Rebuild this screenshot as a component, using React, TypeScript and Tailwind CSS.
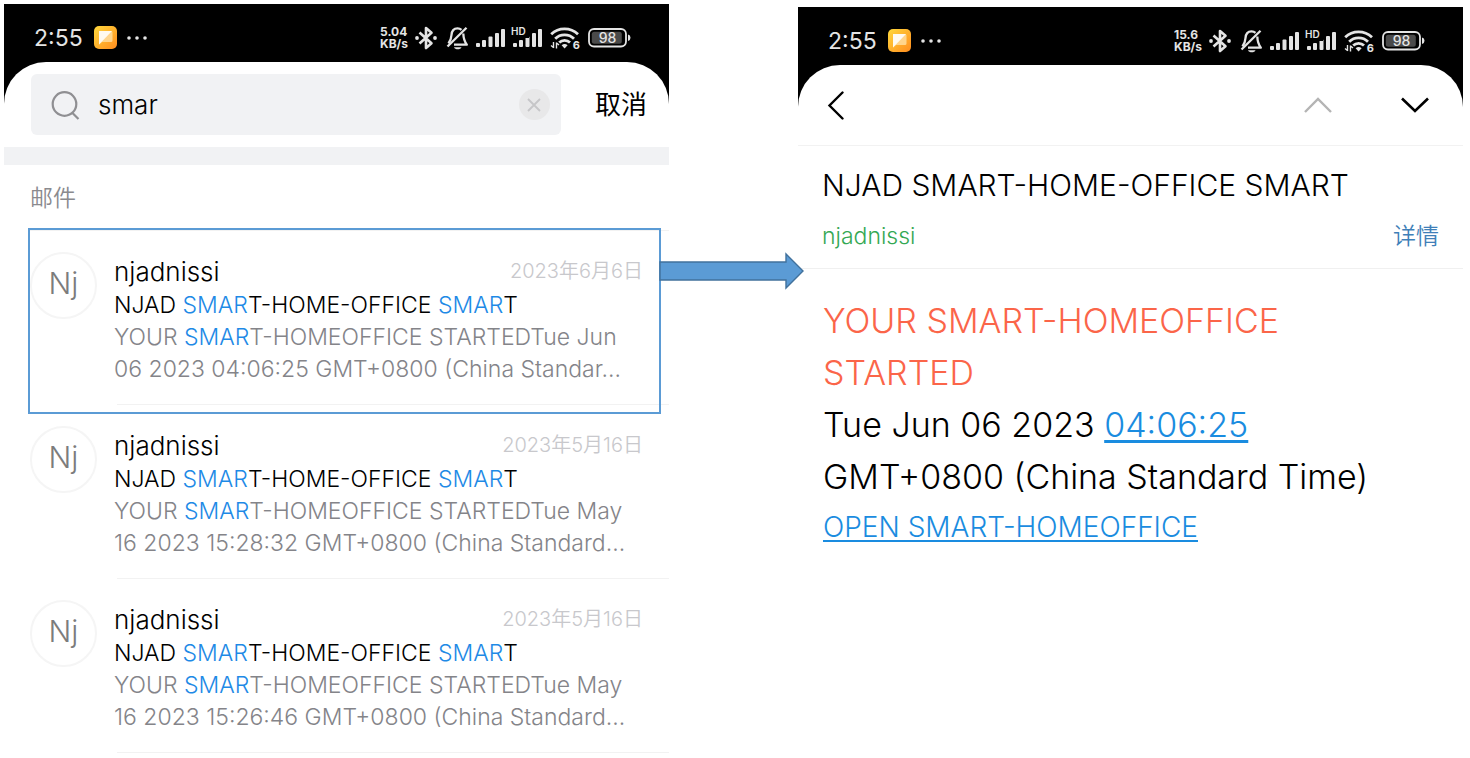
import { useState } from "react";

type Mail = { id: number; date: string; lines: [string, string] };

const mails: Mail[] = [
  { id: 1, date: "2023年6月6日", lines: ["T-HOMEOFFICE STARTEDTue Jun", "06 2023 04:06:25 GMT+0800 (China Standar…"] },
  { id: 2, date: "2023年5月16日", lines: ["T-HOMEOFFICE STARTEDTue May", "16 2023 15:28:32 GMT+0800 (China Standard…"] },
  { id: 3, date: "2023年5月16日", lines: ["T-HOMEOFFICE STARTEDTue May", "16 2023 15:26:46 GMT+0800 (China Standard…"] },
];

function SignalBars() {
  return (
    <g fill="#e4e4e4">
      <rect x="0" y="14" width="4" height="4" rx="1" />
      <rect x="6" y="11" width="4" height="7" rx="1" />
      <rect x="12.500" y="7.500" width="4" height="10.500" rx="1" />
      <rect x="19" y="4" width="4" height="14" rx="1" />
      <rect x="25" y="0" width="4" height="18" rx="1" />
    </g>
  );
}

function StatusBar({ speed, id }: { speed: string; id: string }) {
  return (
    <div className="flex h-[58px] items-center pt-[9px] pl-[30px] pr-[38px] text-[#e4e4e4]">
      <span className="text-[23px] leading-6 font-normal">2:55</span>
      <svg className="ml-[11px] shrink-0" width="23" height="23" viewBox="0 0 23 23" aria-hidden="true">
        <defs>
          <linearGradient id={id} x1="0" y1="0" x2="1" y2="1">
            <stop offset="0" stopColor="#ffd83c" />
            <stop offset="1" stopColor="#ff8c1e" />
          </linearGradient>
        </defs>
        <rect width="23" height="23" rx="5" fill={`url(#${id})`} />
        <path d="M5 5H17Q18.500 5 18.500 6.500V14.500Q18.500 16 17 16H8L5 18.500Z" fill="#ffd58c" />
        <path d="M5 5H18L5 18.500Z" fill="#fffaf0" />
      </svg>
      <svg className="ml-[10px] shrink-0" width="20" height="4" viewBox="0 0 20 4" fill="#e4e4e4" aria-hidden="true">
        <circle cx="2" cy="2" r="1.800" />
        <circle cx="10" cy="2" r="1.800" />
        <circle cx="18" cy="2" r="1.800" />
      </svg>
      <div className="ml-auto w-[31px] text-[12px] leading-3 font-bold whitespace-nowrap">
        <div>{speed}</div>
        <div>KB/s</div>
      </div>
      <svg className="ml-1 shrink-0" width="22" height="24" viewBox="0 0 22 24" fill="none" stroke="#e4e4e4" strokeWidth="2.600" aria-hidden="true">
        <path d="M4.500 6.500L16.500 17.200L11 22V2L16.500 6.800L4.500 17.500" strokeLinejoin="round" />
        <circle cx="2" cy="12" r="1.900" fill="#e4e4e4" stroke="none" />
        <circle cx="20" cy="12" r="1.900" fill="#e4e4e4" stroke="none" />
      </svg>
      <svg className="ml-[9px] shrink-0" width="23" height="24" viewBox="0 0 23 24" fill="none" stroke="#e4e4e4" strokeWidth="2.300" aria-hidden="true">
        <path d="M15.500 3.800C14.300 2.700 13 2.300 11.500 2.300C7.500 2.300 5.700 5.500 5.500 9C5.300 12.500 4.500 14.500 2.500 17.500" />
        <path d="M17.300 7.500C17.500 13 18.500 15.500 20.800 18.700H8" strokeLinejoin="round" />
        <path d="M20.500 1.800L1.500 20.500" />
        <path d="M8 21.300H15.500C14.500 24 9 24 8 21.300Z" fill="#e4e4e4" stroke="none" />
      </svg>
      <svg className="ml-[7px] shrink-0" width="29" height="18" viewBox="0 0 29 18" aria-hidden="true">
        <SignalBars />
      </svg>
      <span className="relative ml-2 h-[18px] w-[29px] shrink-0">
        <svg width="29" height="18" viewBox="0 0 29 18" aria-hidden="true">
          <SignalBars />
          <rect x="0" y="0" width="16" height="9" fill="#000" />
        </svg>
        <span className="absolute -top-[2px] -left-[2px] text-[10px] leading-[9px] font-semibold">HD</span>
      </span>
      <span className="relative ml-2 h-[22px] w-[30px] shrink-0">
        <svg width="30" height="22" viewBox="0 0 30 22" fill="none" stroke="#e4e4e4" strokeWidth="2.800" aria-hidden="true">
          <path d="M1.200 7.200C8.500 0.200 20.500 0.200 28 7.200" />
          <path d="M5.200 11.700C10.300 6.500 18.800 6.500 24 11.700" />
          <path d="M9.200 15.600C12.200 12.600 17 12.600 20 15.600" />
          <path d="M11.600 18.200Q14.600 15.800 17.600 18.200L14.600 21.400Z" fill="#e4e4e4" stroke="none" />
          <path d="M3.500 15V21M3.700 20.700L1 18.500M6.500 21.500V15.500M6.300 15.800L9 18" strokeWidth="1.400" />
        </svg>
        <span className="absolute right-0 -bottom-[1px] text-[11px] leading-[10px] font-bold">6</span>
      </span>
      <span className="relative ml-2 flex h-5 w-[43px] shrink-0 items-center">
        <svg width="43" height="20" viewBox="0 0 43 20" aria-hidden="true">
          <rect x="1" y="1" width="37" height="17.500" rx="5" fill="none" stroke="#e4e4e4" strokeWidth="1.800" />
          <rect x="3.800" y="3.800" width="30" height="12" rx="2.500" fill="#4a4a4a" />
          <path d="M40 6.500Q42.500 7 42.500 9.800Q42.500 12.500 40 13Z" fill="#e4e4e4" />
        </svg>
        <span className="absolute inset-y-0 left-0 w-[39px] text-center text-[14px] leading-5 font-medium">98</span>
      </span>
    </div>
  );
}

function Hit() {
  return <mark className="bg-transparent text-[#1e8ae6]">SMAR</mark>;
}

function Callout() {
  return (
    <div className="pointer-events-none absolute -top-[3px] right-2 left-6 h-[186px] border-2 border-[#5b9bd5]">
      <svg className="absolute top-[22px] left-full" width="145" height="38" viewBox="0 0 145 38" aria-hidden="true">
        <path d="M1 10H127V2L144 19L127 36V28H1Z" fill="#5b9bd5" stroke="#41719c" strokeWidth="1.400" />
      </svg>
    </div>
  );
}

function MailRow({ mail, selected }: { mail: Mail; selected: boolean }) {
  return (
    <li className="relative">
      <div className="flex gap-[17px] pt-[21px] pr-[26px] pb-[19px] pl-[26px]">
        <div className="flex size-[67px] shrink-0 items-center justify-center rounded-full border-2 border-[#f5f5f5] pb-1 text-[30px] text-[#7c7c7c]">
          Nj
        </div>
        <div className="min-w-0 flex-1 pt-[3px]">
          <div className="flex items-start justify-between">
            <span className="text-[26px] leading-[34px]">njadnissi</span>
            <time className="text-[20px] leading-8 text-[#c8c8cc]">{mail.date}</time>
          </div>
          <div className="text-[23px] leading-8 whitespace-nowrap">
            NJAD <Hit />T-HOME-OFFICE <Hit />T
          </div>
          <p className="text-[23px] leading-8 whitespace-nowrap text-[#848489]">
            YOUR <Hit />
            {mail.lines[0]}
            <br />
            {mail.lines[1]}
          </p>
        </div>
      </div>
      <hr className="ml-[113px] border-[#f2f2f2]" />
      {selected && <Callout />}
    </li>
  );
}

function SearchPhone() {
  const [query, setQuery] = useState("smar");
  return (
    <section className="min-w-0 flex-1 bg-black">
      <StatusBar speed="5.04" id="app-icon-a" />
      <div className="rounded-t-[42px] bg-white">
        <div className="flex items-center pt-3 pr-[22px] pb-3 pl-[27px]">
          <div className="flex h-[61px] min-w-0 flex-1 items-center rounded-md bg-[#f1f2f4] pr-[11px] pl-5">
            <svg className="shrink-0" width="30" height="30" viewBox="0 0 30 30" fill="none" stroke="#8f8f92" strokeWidth="2.200" aria-hidden="true">
              <circle cx="13.500" cy="14" r="11.800" />
              <path d="M21 22.500L27.500 29" />
            </svg>
            <input
              aria-label="搜索邮件"
              className="ml-[17px] min-w-0 flex-1 bg-transparent text-[26px] leading-8 outline-none"
              value={query}
              onChange={(e) => setQuery(e.target.value)}
            />
            <button type="button" aria-label="清除" onClick={() => setQuery("")} className="flex size-[31px] shrink-0 items-center justify-center rounded-full bg-[#e8e8e9]">
              <svg width="14" height="14" viewBox="0 0 14 14" stroke="#c6c6c8" strokeWidth="1.800" aria-hidden="true">
                <path d="M1 1L13 13M13 1L1 13" />
              </svg>
            </button>
          </div>
          <button type="button" className="ml-[34px] shrink-0 text-[26px] leading-8 font-normal">取消</button>
        </div>
        <div className="h-[18px] bg-[#f1f2f4]" />
        <h2 className="pt-[17px] pl-[26px] text-[23px] leading-8 text-[#8a8a8e]">邮件</h2>
        <hr className="mt-4 ml-[26px] border-[#f2f2f2]" />
        <ul>
          {mails.map((m) => (
            <MailRow key={m.id} mail={m} selected={m.id === 1} />
          ))}
        </ul>
      </div>
    </section>
  );
}

function MailPhone() {
  return (
    <section className="mt-[3px] min-w-0 flex-1 bg-black">
      <StatusBar speed="15.6" id="app-icon-b" />
      <div className="rounded-t-[42px] bg-white">
        <nav className="flex h-[81px] items-center border-b border-[#f2f2f2] pr-[34px] pl-[29px]">
          <button type="button" aria-label="返回">
            <svg width="18" height="30" viewBox="0 0 18 30" fill="none" stroke="#000" strokeWidth="2.400" strokeLinecap="round" aria-hidden="true">
              <path d="M15.500 2.500L2.500 15.500L15.500 28.500" />
            </svg>
          </button>
          <button type="button" aria-label="上一封" className="ml-auto">
            <svg width="28" height="16" viewBox="0 0 28 16" fill="none" stroke="#b4b4b4" strokeWidth="2.400" aria-hidden="true">
              <path d="M1 15L14 2L27 15" />
            </svg>
          </button>
          <button type="button" aria-label="下一封" className="ml-[69px]">
            <svg width="28" height="16" viewBox="0 0 28 16" fill="none" stroke="#000" strokeWidth="2.600" aria-hidden="true">
              <path d="M1 1.500L14 14L27 1.500" />
            </svg>
          </button>
        </nav>
        <header className="border-b border-[#f0f0f0] pt-[19px] pr-6 pb-[18px] pl-6">
          <h1 className="text-[30px] leading-10">NJAD SMART-HOME-OFFICE SMART</h1>
          <div className="mt-[17px] flex items-center justify-between leading-7">
            <span className="text-[23px] text-[#34a853]">njadnissi</span>
            <button type="button" className="text-[23px] text-[#3f7fb8]">详情</button>
          </div>
        </header>
        <article className="pt-[26px] pr-6 pl-[25px] text-[34px] leading-[52px]">
          <p className="text-[#fb6549]">
            YOUR SMART-HOMEOFFICE
            <br />
            STARTED
          </p>
          <p>
            Tue Jun 06 2023{" "}
            <a href="#time" className="text-[#1a8ce0] underline decoration-3 underline-offset-3">04:06:25</a>
            <br />
            GMT+0800 (China Standard Time)
          </p>
          <p className="text-[28px] leading-[48px]">
            <a href="#open" className="text-[#1a8ce0] underline decoration-2 underline-offset-3">OPEN SMART-HOMEOFFICE</a>
          </p>
        </article>
      </div>
    </section>
  );
}

export default function App() {
  return (
    <main className="flex items-start gap-[129px] bg-white pt-1 pr-[7px] pl-1 font-['Inter','Noto_Sans_CJK_SC',sans-serif] font-[350] text-black">
      <SearchPhone />
      <MailPhone />
    </main>
  );
}
